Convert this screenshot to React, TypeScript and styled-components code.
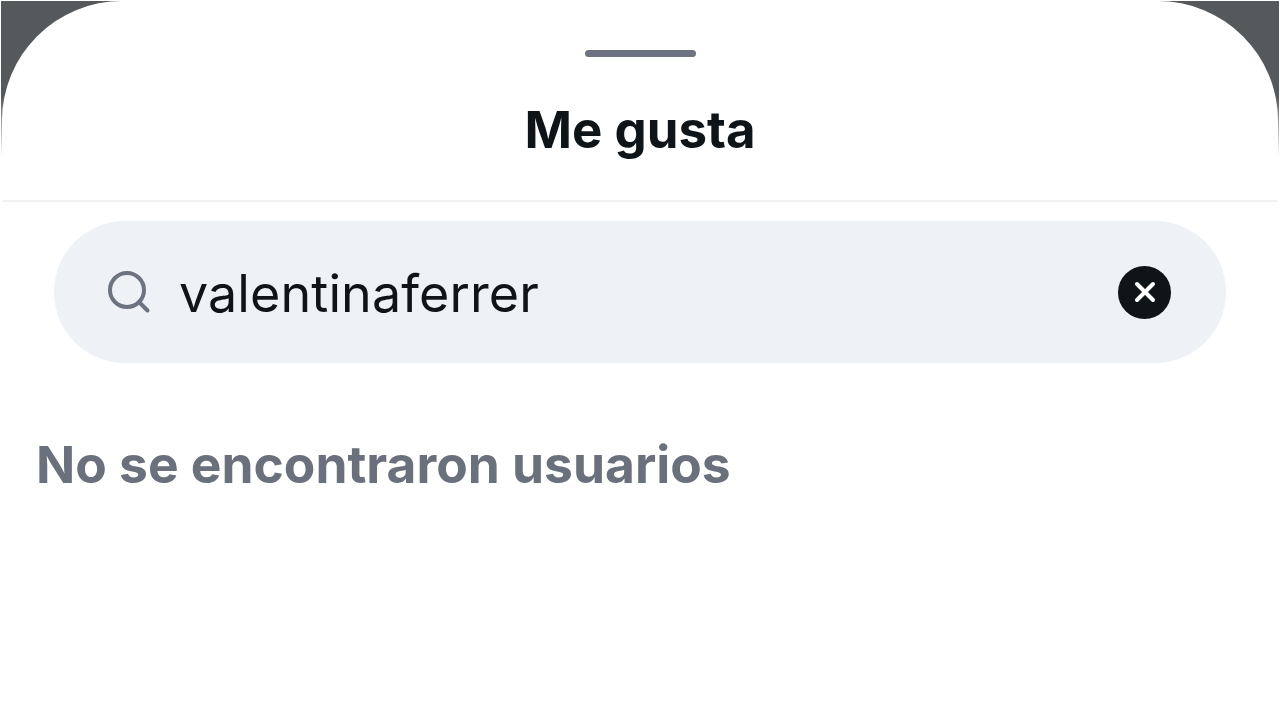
import styled, { createGlobalStyle } from "styled-components";

const GlobalStyle = createGlobalStyle`
  html, body {
    margin: 0;
    padding: 0;
    background: #fff;
  }
  * {
    box-sizing: border-box;
  }
`;

const Backdrop = styled.div`
  width: 1280px;
  height: 720px;
  padding: 1px 1px 0 1px;
  background: #fff;
  overflow: hidden;
`;

const Dim = styled.div`
  height: 719px;
  padding: 0 1px;
  background: linear-gradient(#55595c 0, #55595c 95px, #fff 155px);
`;

const Sheet = styled.section`
  height: 100%;
  background: #fff;
  border-radius: 120px 120px 0 0;
  font-family: Inter, "Liberation Sans", sans-serif;
  filter: blur(0.4px);
`;

const Header = styled.header`
  height: 201px;
  padding-top: 49px;
  display: flex;
  flex-direction: column;
  align-items: center;
  border-bottom: 2px solid #f0f1f3;
`;

const Handle = styled.div`
  width: 111px;
  height: 7px;
  border-radius: 4px;
  background: #6d7380;
`;

const Title = styled.h1`
  margin: 44px 0 0;
  font-size: 51px;
  line-height: 58px;
  font-weight: 700;
  color: #0f1419;
`;

const SearchBar = styled.div`
  height: 142px;
  margin: 19px 52px 0 52px;
  padding: 0 55px 0 52px;
  display: flex;
  align-items: center;
  border-radius: 71px;
  background: #eef1f5;
`;

const SearchIcon = styled.svg`
  width: 46px;
  height: 46px;
  flex: none;
  color: #6d7380;
`;

const Query = styled.span`
  flex: 1;
  margin-left: 27px;
  padding-top: 4px;
  font-size: 52px;
  line-height: 60px;
  letter-spacing: 0.1px;
  font-weight: 400;
  color: #0f1419;
`;

const ClearButton = styled.button`
  width: 53px;
  height: 53px;
  padding: 0;
  border: 0;
  border-radius: 50%;
  display: flex;
  align-items: center;
  justify-content: center;
  background: #0f1419;
`;

const Empty = styled.p`
  margin: 71px 0 0 34px;
  font-size: 51.5px;
  line-height: 60px;
  font-weight: 700;
  color: #6a717d;
`;

export default function App() {
  return (
    <>
      <GlobalStyle />
      <Backdrop>
        <Dim>
          <Sheet>
            <Header>
              <Handle />
              <Title>Me gusta</Title>
            </Header>
            <SearchBar>
              <SearchIcon viewBox="0 0 46 46" fill="none" stroke="currentColor" strokeWidth="4" strokeLinecap="round">
                <circle cx="21" cy="21" r="17" />
                <path d="M33 33 L41.5 41.5" />
              </SearchIcon>
              <Query>valentinaferrer</Query>
              <ClearButton aria-label="Borrar">
                <svg width="24" height="24" viewBox="0 0 24 24" fill="none" stroke="#fff" strokeWidth="4" strokeLinecap="round">
                  <path d="M4 4 L20 20 M20 4 L4 20" />
                </svg>
              </ClearButton>
            </SearchBar>
            <Empty>No se encontraron usuarios</Empty>
          </Sheet>
        </Dim>
      </Backdrop>
    </>
  );
}
